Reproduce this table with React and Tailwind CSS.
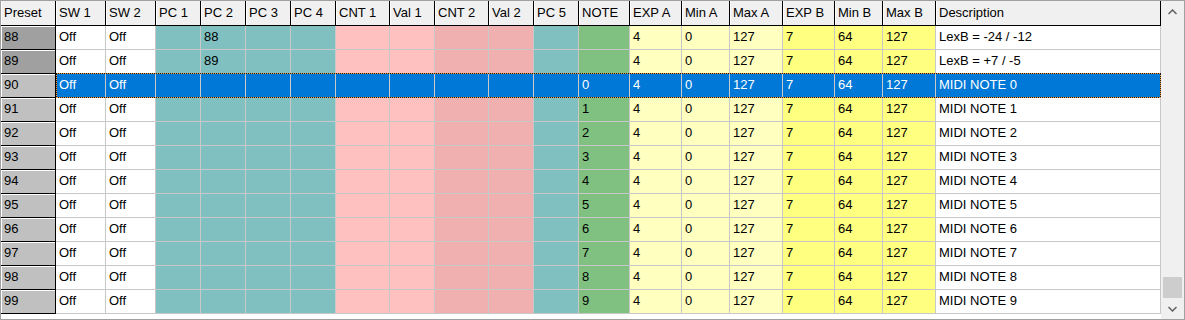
const columns = [
  { name: "Preset", w: "w-[55px]" },
  { name: "SW 1", w: "w-[50px]", bg: "bg-white" },
  { name: "SW 2", w: "w-[50px]", bg: "bg-white" },
  { name: "PC 1", w: "w-[45px]", bg: "bg-[#80c0c0]" },
  { name: "PC 2", w: "w-[45px]", bg: "bg-[#80c0c0]" },
  { name: "PC 3", w: "w-[45px]", bg: "bg-[#80c0c0]" },
  { name: "PC 4", w: "w-[45px]", bg: "bg-[#80c0c0]" },
  { name: "CNT 1", w: "w-[54px]", bg: "bg-[#ffc0c0]" },
  { name: "Val 1", w: "w-[45px]", bg: "bg-[#ffc0c0]" },
  { name: "CNT 2", w: "w-[54px]", bg: "bg-[#f0b0b0]" },
  { name: "Val 2", w: "w-[45px]", bg: "bg-[#f0b0b0]" },
  { name: "PC 5", w: "w-[45px]", bg: "bg-[#80c0c0]" },
  { name: "NOTE", w: "w-[51px]", bg: "bg-[#80c080]" },
  { name: "EXP A", w: "w-[52px]", bg: "bg-[#ffffc0]" },
  { name: "Min A", w: "w-[48px]", bg: "bg-[#ffffc0]" },
  { name: "Max A", w: "w-[53px]", bg: "bg-[#ffffc0]" },
  { name: "EXP B", w: "w-[52px]", bg: "bg-[#ffff80]" },
  { name: "Min B", w: "w-[48px]", bg: "bg-[#ffff80]" },
  { name: "Max B", w: "w-[53px]", bg: "bg-[#ffff80]" },
  { name: "Description", w: "w-[225px]", bg: "bg-white" },
];

const rows = [88, 89, 90, 91, 92, 93, 94, 95, 96, 97, 98, 99].map((n) => {
  const special = n < 90;
  return {
    preset: String(n),
    dark: special,
    cells: [
      "Off",
      "Off",
      "",
      special ? String(n) : "",
      "",
      "",
      "",
      "",
      "",
      "",
      "",
      special ? "" : String(n - 90),
      "4",
      "0",
      "127",
      "7",
      "64",
      "127",
      n === 88 ? "LexB = -24 / -12" : n === 89 ? "LexB = +7 / -5" : `MIDI NOTE ${n - 90}`,
    ],
  };
});

const SELECTED = 90;

function Chevron({ up }) {
  return (
    <svg width="9" height="6" viewBox="0 0 9 6" className="text-[#606060]">
      <polyline
        points={up ? "0.5,5 4.5,1 8.5,5" : "0.5,1 4.5,5 8.5,1"}
        fill="none"
        stroke="currentColor"
        strokeWidth="1.5"
      />
    </svg>
  );
}

export default function App() {
  return (
    <div
      className="w-[1185px] h-[320px] border border-[#a0a0a0] bg-white flex text-[13px] text-black overflow-hidden"
      style={{ fontFamily: '"Liberation Sans", Arial, sans-serif' }}
    >
      <div className="w-[1160px] flex flex-col">
        {/* header */}
        <div className="flex h-[25px] shrink-0">
          {columns.map((c) => (
            <div
              key={c.name}
              className={`${c.w} shrink-0 h-[25px] bg-[#f0f0f0] border-r border-b border-black shadow-[inset_1px_0_0_#ffffff] pl-[3px] leading-[24px] whitespace-nowrap overflow-hidden`}
            >
              {c.name}
            </div>
          ))}
        </div>

        {/* body */}
        {rows.map((r) => {
          const sel = Number(r.preset) === SELECTED;
          return (
            <div key={r.preset} className="relative flex h-[24px] shrink-0">
              <div
                className={`w-[55px] shrink-0 h-[24px] border-r border-b border-black shadow-[inset_1px_1px_0_#ffffff] pl-[3px] leading-[21px] ${
                  r.dark ? "bg-[#a0a0a0]" : "bg-[#c0c0c0]"
                }`}
              >
                {r.preset}
              </div>
              {r.cells.map((v, i) => {
                const c = columns[i + 1];
                return (
                  <div
                    key={i}
                    className={`${c.w} shrink-0 h-[24px] border-r border-b border-[#c8c8c8] pl-[3px] leading-[21px] whitespace-nowrap overflow-hidden ${
                      sel ? "bg-[#0078d7] text-white" : c.bg
                    }`}
                  >
                    {v}
                  </div>
                );
              })}
              {sel && (
                <>
                  <div className="absolute left-[55px] right-0 top-[-1px] h-[1px] bg-[repeating-linear-gradient(90deg,#1a1a1a_0_1px,#f5a040_1px_2px)]" />
                  <div className="absolute left-[55px] right-0 bottom-0 h-[1px] bg-[repeating-linear-gradient(90deg,#1a1a1a_0_1px,#f5a040_1px_2px)]" />
                  <div className="absolute left-[55px] top-0 bottom-0 w-[1px] bg-[repeating-linear-gradient(180deg,#1a1a1a_0_1px,#f5a040_1px_2px)]" />
                  <div className="absolute right-0 top-0 bottom-0 w-[1px] bg-[repeating-linear-gradient(180deg,#1a1a1a_0_1px,#f5a040_1px_2px)]" />
                </>
              )}
            </div>
          );
        })}
      </div>

      {/* vertical scrollbar */}
      <div className="w-[23px] shrink-0 bg-[#f0f0f0] flex flex-col items-center">
        <div className="h-[22px] flex items-center justify-center w-full">
          <Chevron up />
        </div>
        <div className="flex-1 w-full flex flex-col justify-end px-[2px]">
          <div className="h-[21px] bg-[#cdcdcd]" />
        </div>
        <div className="h-[21px] flex items-center justify-center w-full">
          <Chevron />
        </div>
      </div>
    </div>
  );
}
